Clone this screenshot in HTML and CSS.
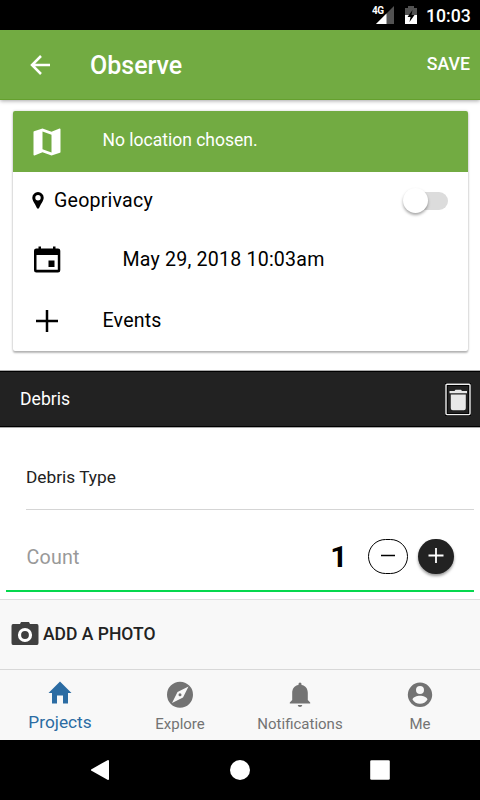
FILE: index.html
```html
<!DOCTYPE html>
<html lang="en">
<head>
<meta charset="utf-8">
<title>Observe</title>
<link rel="stylesheet" href="styles.css">
</head>
<body>
<div class="status">
  <svg class="signal" width="24" height="20" viewBox="0 0 24 20"><path d="M5 19L23 1v18z" fill="#525252"/><path d="M5 19L15.500 8.500V19z" fill="#fff"/></svg>
  <span class="network">4G</span>
  <svg class="battery" width="12" height="18" viewBox="0 0 12 18"><path d="M0 2h3V0h6v2h3v7H0z" fill="#525252"/><path d="M0 9h12v9H0z" fill="#fff"/><path d="M7.500 4L2.500 11h3L4.500 16l5-7h-3z" fill="#000"/></svg>
  <span class="clock">10:03</span>
</div>
<header class="header">
  <svg class="back" width="20" height="20" viewBox="0 0 20 20" fill="none" stroke="#fff" stroke-width="2.500"><path d="M20 10H2M11 1L2 10l9 9"/></svg>
  <h1 class="title">Observe</h1>
  <span class="save">SAVE</span>
</header>
<main class="content">
  <section class="card">
    <div class="row location">
      <svg class="icon" width="36" height="36" viewBox="0 0 24 24" fill="#fff"><path d="M20.500 3l-.16.030L15 5.100 9 3 3.360 4.900c-.21.070-.36.250-.36.480V20.500c0 .28.220.5.500.5l.16-.030L9 18.900l6 2.100 5.640-1.900c.21-.070.36-.250.360-.480V3.500c0-.28-.220-.5-.5-.5zM15 19l-6-2.110V5l6 2.110V19z"/></svg>
      <span class="location-text">No location chosen.</span>
    </div>
    <div class="row privacy">
      <svg class="pin" width="12" height="17" viewBox="0 0 12 17"><path fill-rule="evenodd" d="M6 0a5.700 5.700 0 0 0-5.700 5.700C.3 9 4 13 4.900 16.100Q6 17.500 7.100 16.100C8 13 11.700 9 11.700 5.700A5.700 5.700 0 0 0 6 0zM6 3a2.700 2.700 0 1 1 0 5.400A2.700 2.700 0 0 1 6 3z"/></svg>
      <span class="privacy-text">Geoprivacy</span>
      <span class="toggle"><span class="knob"></span></span>
    </div>
    <div class="row date">
      <svg class="icon" width="36" height="36" viewBox="0 0 36 36"><path fill-rule="evenodd" d="M9.500 4.500H12v2h12v-2h2.500v2h2.500q2.300 0 2.300 2.300v19.400q0 2.300-2.300 2.300H7.300Q5 30.500 5 28.200V8.800q0-2.300 2.300-2.300h2.200zM7.500 13v14.700h21.300V13zM19.500 18.500h6v6.500h-6z"/></svg>
      <span class="date-text">May 29, 2018 10:03am</span>
    </div>
    <div class="row events">
      <svg class="icon" width="36" height="36" viewBox="0 0 36 36"><path d="M18 7v22M7 18h22" stroke="#000" stroke-width="2.500"/></svg>
      <span class="events-text">Events</span>
    </div>
  </section>
  <section class="section-bar">
    <h2 class="section-title">Debris</h2>
    <svg width="26" height="33" viewBox="0 0 26 33"><rect x="1" y="1.200" width="24" height="30.800" rx="1" fill="#222" stroke="#000" stroke-width="3.500"/><rect x="1" y="1.200" width="24" height="30.400" rx="1" fill="none" stroke="#f2f2f2" stroke-width="1.400"/><path d="M4.500 8h5l1-1.300H16L17 8h5v2.200H4.500zM5.800 11.500h15v13.700q0 2-2 2h-11q-2 0-2-2z" fill="#e8e8e8"/></svg>
  </section>
  <div class="type">Debris Type</div>
  <div class="count">
    <span class="count-label">Count</span>
    <strong class="count-value">1</strong>
    <span class="minus"><svg width="16" height="16"><path d="M1 7.500h14" stroke="#000" stroke-width="1.500"/></svg></span>
    <span class="plus"><svg width="16" height="16"><path d="M.5 7.500h15M8 0v15" stroke="#fff" stroke-width="1.800"/></svg></span>
  </div>
</main>
<div class="photo">
  <svg width="28" height="24" viewBox="0 0 28 24"><path d="M2 2h7l1-2h8l1 2h7q1.500 0 1.500 2v17q0 2-1.500 2H2q-1.500 0-1.500-2V4Q.5 2 2 2z" fill="#404040"/><circle cx="14" cy="13" r="5.500" fill="none" stroke="#fff" stroke-width="3.200"/></svg>
  <span class="photo-text">ADD A PHOTO</span>
</div>
<nav class="tabs">
  <div class="tab active"><svg width="26" height="28" viewBox="0 0 26 28"><path d="M13 1.500L24.500 13H21v10.500h-5v-8h-6v8H5V13H1.500z"/></svg><span>Projects</span></div>
  <div class="tab"><svg width="26" height="28" viewBox="0 0 26 28"><path fill-rule="evenodd" d="M13 1.800a13 13 0 1 1 0 26 13 13 0 0 1 0-26zM21.500 6.500L10.500 12 5 23l11-5.500zM13 13.200a1.500 1.500 0 1 1 0 3 1.500 1.500 0 0 1 0-3z"/></svg><span>Explore</span></div>
  <div class="tab"><svg width="26" height="28" viewBox="0 0 26 28"><path d="M11.500 5V4a1.500 1.500 0 0 1 3 0v1c4.300.6 6.300 4 6.300 8v7l2.400 2.500v1H2.800v-1L5.200 20v-7c0-4 2-7.400 6.300-8zM10.700 25h4.600Q15 27 13 27t-2.300-2z"/></svg><span>Notifications</span></div>
  <div class="tab"><svg width="26" height="28" viewBox="0 0 26 28"><path fill-rule="evenodd" d="M13 2.600a12.200 12.200 0 1 1 0 24.400 12.200 12.200 0 0 1 0-24.400zM13 6a4 4 0 1 0 0 8 4 4 0 0 0 0-8zM5.500 19.500c3 5.700 12 5.700 15 0-1.500-5-13.500-5-15 0z"/></svg><span>Me</span></div>
</nav>
<div class="navigation">
  <svg width="20" height="20" viewBox="0 0 20 20"><path d="M18 1L2 10l16 9z" stroke-width="2" stroke-linejoin="round" stroke="#fff"/></svg>
  <svg width="20" height="20" viewBox="0 0 20 20"><circle cx="10" cy="10" r="10"/></svg>
  <svg width="20" height="20" viewBox="0 0 20 20"><rect x=".2" y=".2" width="19.600" height="19.600" rx="1.300"/></svg>
</div>
</body>
</html>
```
FILE: styles.css
```css
* { box-sizing: border-box; }
body {
  margin: 0;
  width: 480px;
  height: 800px;
  overflow: hidden;
  display: flex;
  flex-direction: column;
  background: #fff;
  color: #000;
  font-family: Roboto, sans-serif;
}
svg { display: block; flex: none; }
span, h1, h2 { white-space: nowrap; }
.status {
  position: relative;
  height: 30px;
  flex: none;
  display: flex;
  justify-content: flex-end;
  align-items: flex-start;
  padding: 0 9px 0 0;
  background: #000;
  color: #fff;
}
.signal { margin: 5px 10px 0 0; }
.network {
  position: absolute;
  left: 372px;
  top: 5px;
  font: 700 10px/11px "Roboto", sans-serif;
  letter-spacing: -.6px;
}
.battery { margin: 6px 9px 0 0; }
.clock { font-size: 17.700px; font-weight: 500; line-height: 32px; width: 45px; }
.header {
  position: relative;
  z-index: 1;
  height: 70px;
  flex: none;
  display: flex;
  align-items: center;
  padding: 0 10px 0 30px;
  background: #72ab42;
  border-bottom: 1px solid #65a02e;
  color: #fff;
  box-shadow: 0 1px 4px rgba(0, 0, 0, .35);
}
.title { margin: 1px 0 0 40px; font-size: 25px; font-weight: 500; }
.save { margin: -2px 0 0 auto; font-size: 17.700px; font-weight: 500; }
.content { height: 499px; flex: none; }
.card {
  height: 240px;
  margin: 11px 12px 20px 12.500px;
  border-radius: 2px;
  overflow: hidden;
  box-shadow: 0 2px 2px rgba(0, 0, 0, .25), 0 0 3px rgba(0, 0, 0, .18);
}
.row { display: flex; align-items: center; }
.location {
  height: 61px;
  padding-left: 16.500px;
  background: #72ab42;
  color: #fff;
}
.location-text { margin: -3px 0 0 37.500px; font-size: 17.500px; }
.privacy { height: 57px; padding: 0 20.500px 0 19.500px; }
.privacy-text { margin-left: 10px; font-size: 19.600px; letter-spacing: .2px; }
.toggle {
  position: relative;
  width: 35px;
  height: 18px;
  margin: 1px 0 0 auto;
  border-radius: 9px;
  background: #dcdcdc;
}
.knob {
  position: absolute;
  left: -10px;
  top: -4px;
  width: 25px;
  height: 25px;
  border-radius: 50%;
  background: #fff;
  box-shadow: 0 2px 3px rgba(0, 0, 0, .35);
}
.date { height: 61px; padding-left: 16.500px; }
.date-text { margin-left: 57.500px; font-size: 19.600px; letter-spacing: .2px; }
.events { height: 61px; padding-left: 16.500px; }
.events-text { margin-left: 37.500px; font-size: 19.600px; letter-spacing: .2px; }
.section-bar {
  height: 56px;
  display: flex;
  align-items: center;
  justify-content: space-between;
  padding: 0 9.500px 0 20px;
  background: #222;
  border-top: 1px solid #000;
  border-bottom: 1px solid #000;
  box-shadow: 0 0 0 1px #aaa;
  color: #fff;
}
.section-title { margin: 0; font-size: 17.600px; font-weight: 400; }
.type {
  height: 83px;
  margin: 0 6px 0 26px;
  padding-top: 19px;
  border-bottom: 1px solid #d5d5d5;
  color: #222;
  font-size: 17.300px;
  line-height: 63px;
}
.count {
  height: 82px;
  margin: 0 6px;
  padding: 12px 20.500px 0 20.500px;
  display: flex;
  align-items: center;
  border-bottom: 2px solid #05d84d;
}
.count-label { padding-top: 2px; color: #999; font-size: 19.700px; letter-spacing: .2px; }
.count-value { margin-left: auto; font-size: 30px; }
.minus, .plus {
  display: flex;
  align-items: center;
  justify-content: center;
  height: 35px;
  border-radius: 18px;
}
.minus { width: 40px; margin-left: 20px; border: 1px solid #000; }
.plus { width: 36px; margin-left: 10px; background: #222; box-shadow: 0 2px 3px rgba(0, 0, 0, .4); }
.photo {
  height: 70px;
  flex: none;
  display: flex;
  align-items: center;
  padding: 0 0 2px 11px;
  background: #f8f8f8;
  border-top: 1px solid #dedede;
}
.photo-text { margin-left: 4px; color: #222; font-size: 17.500px; font-weight: 500; }
.tabs {
  height: 71px;
  flex: none;
  display: grid;
  grid-template-columns: repeat(4, 1fr);
  background: #f8f8f8;
  border-top: 1px solid #d8d8d8;
}
.tab {
  display: flex;
  flex-direction: column;
  align-items: center;
  padding-top: 10px;
  color: #737373;
  fill: #737373;
  font-size: 15px;
  line-height: 20px;
}
.tab span { margin-top: 6px; }
.active { color: #2b6ca3; fill: #2b6ca3; font-size: 17.300px; }
.active span { margin-top: 4px; }
.navigation {
  height: 60px;
  flex: none;
  display: flex;
  justify-content: center;
  gap: 120px;
  align-items: center;
  background: #000;
  fill: #fff;
}
```
